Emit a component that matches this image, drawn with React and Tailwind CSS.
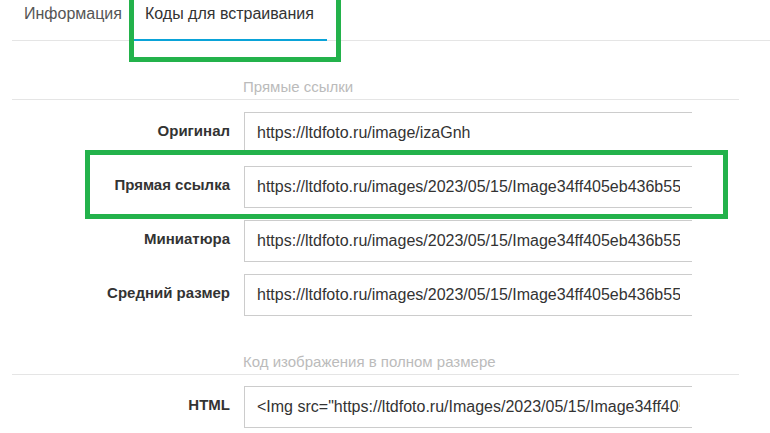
import React from 'react'

const FONT = { fontFamily: '"Liberation Sans", Arial, sans-serif' }

const DIRECT = [
  { label: 'Оригинал', value: 'https://ltdfoto.ru/image/izaGnh' },
  { label: 'Прямая ссылка', value: 'https://ltdfoto.ru/images/2023/05/15/Image34ff405eb436b55cd6e3a0a1.png' },
  { label: 'Миниатюра', value: 'https://ltdfoto.ru/images/2023/05/15/Image34ff405eb436b55cd6e3a0a1.th.png' },
  { label: 'Средний размер', value: 'https://ltdfoto.ru/images/2023/05/15/Image34ff405eb436b55cd6e3a0a1.md.png' },
]

const FULL = [
  { label: 'HTML', value: '<Img src="https://ltdfoto.ru/Images/2023/05/15/Image34ff405eb436b55cd6e3a0a1.png" alt="Image" border="0">' },
]

// ── Section title with rule under it ───────────────────────────────────────
function SectionTitle({ children }) {
  return (
    <div className="mt-[36px] pl-[231px] pb-[2px] border-b border-[#e5e5e5] text-[15px] leading-[20px] text-[#bbbbbb]">
      {children}
    </div>
  )
}

// ── Label + readonly input row ─────────────────────────────────────────────
function CodeRow({ label, value }) {
  return (
    <div className="flex items-center">
      <label className="w-[220px] pr-[2px] pb-[4px] text-right text-[15px] leading-[20px] font-bold text-[#333]">
        {label}
      </label>
      <input
        readOnly
        value={value}
        className="ml-[12px] w-[448px] h-[42px] px-3 border border-r-0 border-[#cccccc] bg-white text-[16px] text-[#333] outline-none"
        style={FONT}
      />
    </div>
  )
}

export default function App() {
  return (
    <div className="relative min-h-screen bg-white overflow-hidden" style={FONT}>
      {/* Tabs */}
      <div className="ml-[12px] flex h-[41px] border-b border-[#e5e5e5] text-[16px] leading-[22px]">
        <div className="px-[12px] pt-[3px] text-[#555]">Информация</div>
        <div className="px-[11px] pt-[3px] w-[193px] border-b-2 border-[#0aa3d8] -mb-px text-[#333]">
          Коды для встраивания
        </div>
      </div>

      <div className="ml-[12px] w-[727px]">
        <SectionTitle>Прямые ссылки</SectionTitle>
        <div className="mt-[12px] flex flex-col gap-[12px]">
          {DIRECT.map(r => <CodeRow key={r.label} {...r} />)}
        </div>

        <SectionTitle>Код изображения в полном размере</SectionTitle>
        <div className="mt-[11px] flex flex-col gap-[12px]">
          {FULL.map(r => <CodeRow key={r.label} {...r} />)}
        </div>
      </div>

      {/* Highlight boxes */}
      <div className="absolute left-[129px] top-[-5px] w-[212px] h-[67px] border-[5px] border-[#23b24b] pointer-events-none" />
      <div className="absolute left-[85px] top-[150px] w-[643px] h-[69px] border-[5px] border-[#23b24b] pointer-events-none" />
    </div>
  )
}
